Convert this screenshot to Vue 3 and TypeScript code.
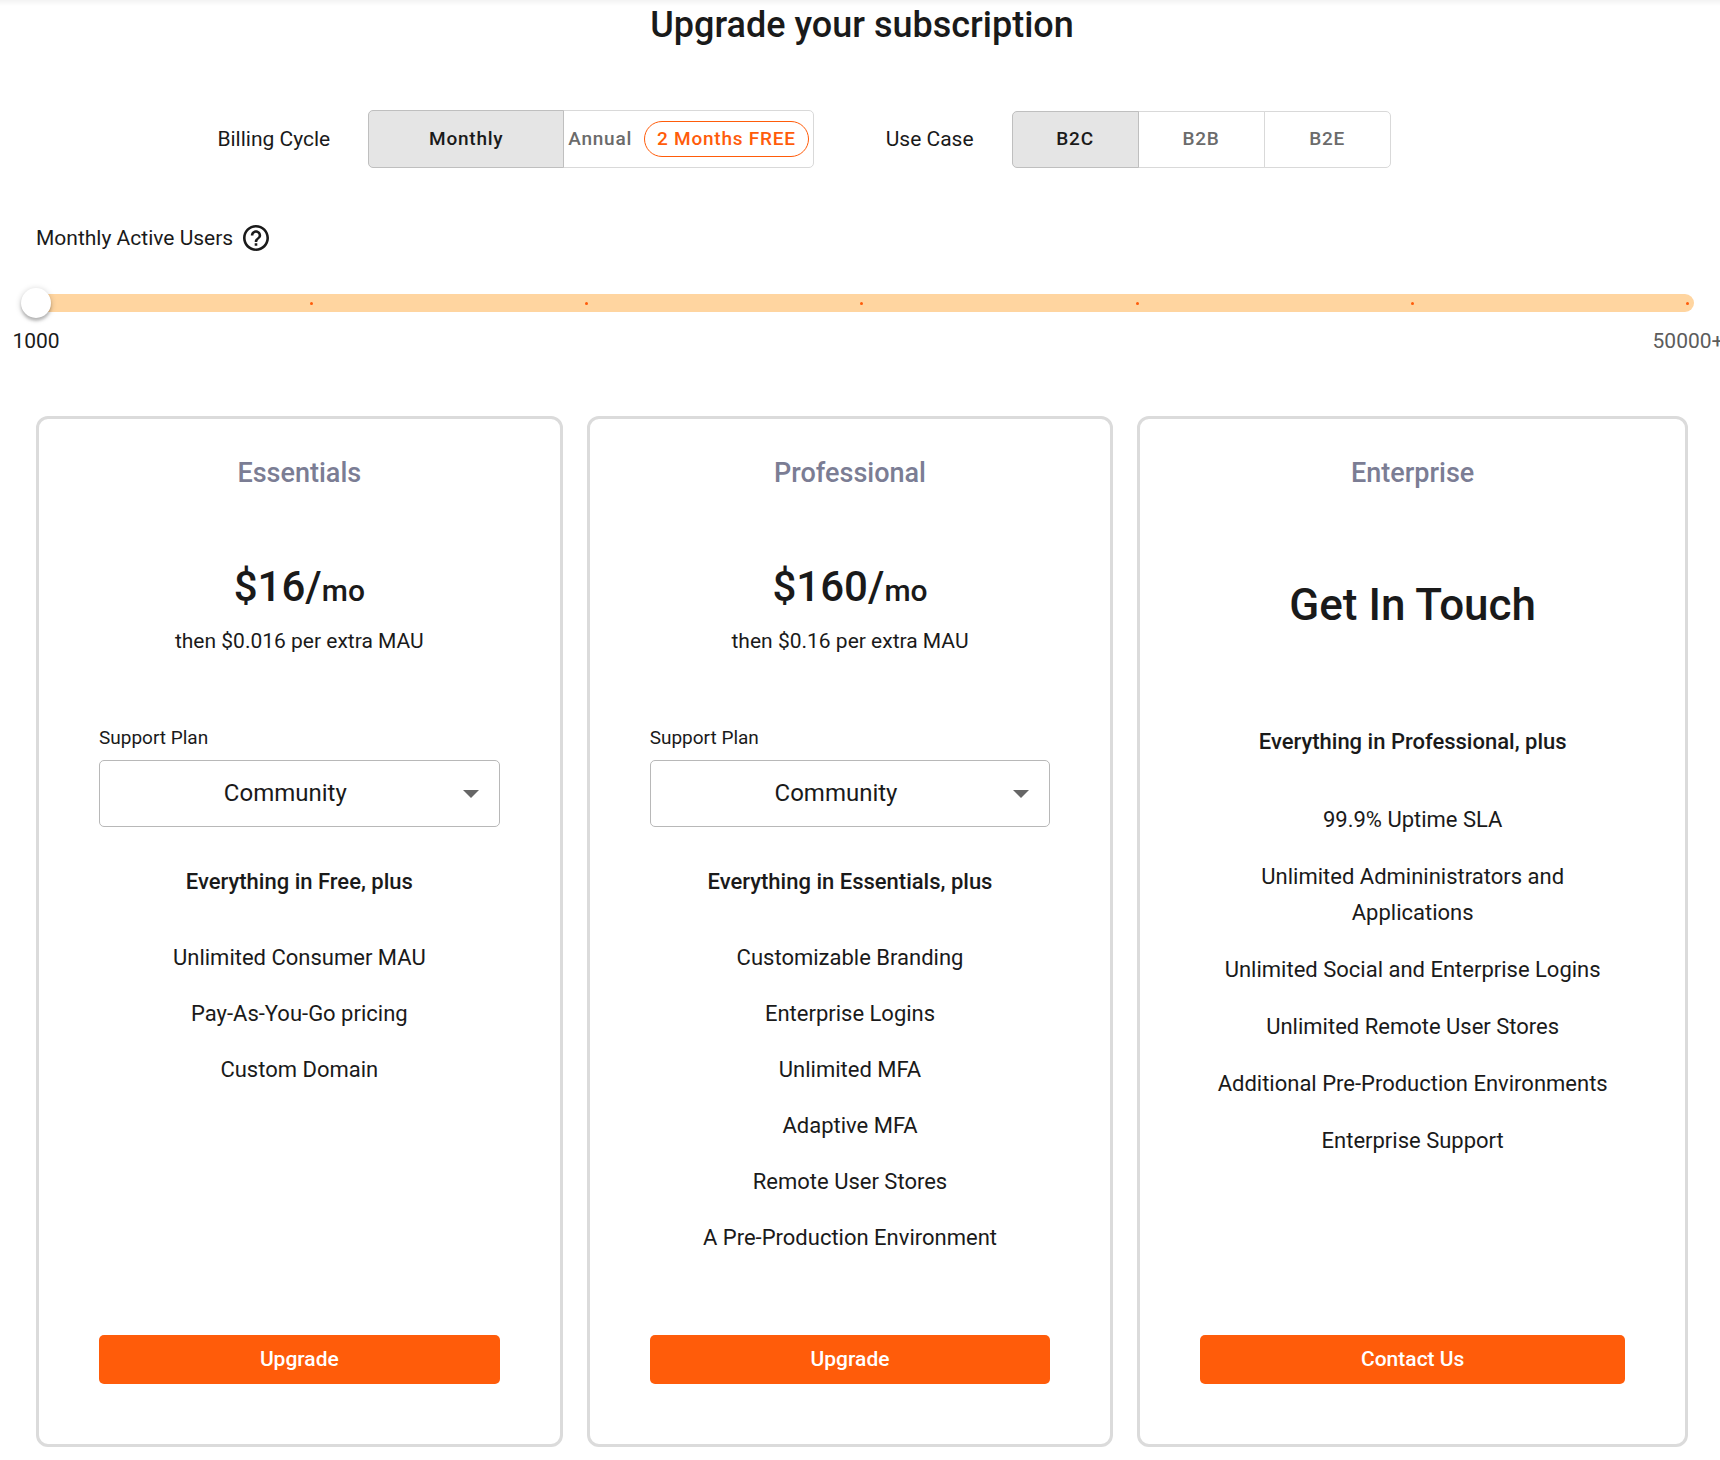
<script setup lang="ts">
import { ref } from 'vue'

interface Plan {
  id: string
  name: string
  price?: string
  extra?: string
  headline?: string
  intro: string
  features: string[]
  action: string
}

const cycle = ref<'monthly' | 'annual'>('monthly')
const useCase = ref('B2C')
const useCases = ['B2C', 'B2B', 'B2E']
const userStep = ref(0)
const stops = 7
const support = ref<Record<string, string>>({
  essentials: 'Community',
  professional: 'Community',
})
const supportPlans = ['Community', 'Standard', 'Premium']

const plans: Plan[] = [
  {
    id: 'essentials',
    name: 'Essentials',
    price: '$16/',
    extra: 'then $0.016 per extra MAU',
    intro: 'Everything in Free, plus',
    features: ['Unlimited Consumer MAU', 'Pay-As-You-Go pricing', 'Custom Domain'],
    action: 'Upgrade',
  },
  {
    id: 'professional',
    name: 'Professional',
    price: '$160/',
    extra: 'then $0.16 per extra MAU',
    intro: 'Everything in Essentials, plus',
    features: [
      'Customizable Branding',
      'Enterprise Logins',
      'Unlimited MFA',
      'Adaptive MFA',
      'Remote User Stores',
      'A Pre-Production Environment',
    ],
    action: 'Upgrade',
  },
  {
    id: 'enterprise',
    name: 'Enterprise',
    headline: 'Get In Touch',
    intro: 'Everything in Professional, plus',
    features: [
      '99.9% Uptime SLA',
      'Unlimited Admininistrators and Applications',
      'Unlimited Social and Enterprise Logins',
      'Unlimited Remote User Stores',
      'Additional Pre-Production Environments',
      'Enterprise Support',
    ],
    action: 'Contact Us',
  },
]
</script>

<template>
  <main class="page">
    <h1 class="title">Upgrade your subscription</h1>

    <div class="options">
      <div class="option" role="group" aria-labelledby="cycle-label">
        <span id="cycle-label" class="option-label">Billing Cycle</span>
        <div class="toggle">
          <button
            type="button"
            class="toggle-button monthly"
            :class="{ selected: cycle === 'monthly' }"
            :aria-pressed="cycle === 'monthly'"
            @click="cycle = 'monthly'"
          >Monthly</button>
          <button
            type="button"
            class="toggle-button annual"
            :class="{ selected: cycle === 'annual' }"
            :aria-pressed="cycle === 'annual'"
            @click="cycle = 'annual'"
          >Annual <span class="offer">2 Months FREE</span></button>
        </div>
      </div>
      <div class="option" role="group" aria-labelledby="case-label">
        <span id="case-label" class="option-label">Use Case</span>
        <div class="toggle">
          <button
            v-for="item in useCases"
            :key="item"
            type="button"
            class="toggle-button case"
            :class="{ selected: useCase === item }"
            :aria-pressed="useCase === item"
            @click="useCase = item"
          >{{ item }}</button>
        </div>
      </div>
    </div>

    <section class="users">
      <div class="users-head">
        <label for="mau">Monthly Active Users</label>
        <svg class="help" viewBox="2 2 20 20" aria-hidden="true">
          <path d="M11 18h2v-2h-2v2zm1-16C6.480 2 2 6.480 2 12s4.480 10 10 10 10-4.480 10-10S17.520 2 12 2zm0 18c-4.410 0-8-3.590-8-8s3.590-8 8-8 8 3.590 8 8-3.590 8-8 8zm0-14c-2.210 0-4 1.790-4 4h2c0-1.100.9-2 2-2s2 .9 2 2c0 2-3 1.750-3 5h2c0-2.250 3-2.500 3-5 0-2.210-1.790-4-4-4z" />
        </svg>
      </div>
      <div class="slider">
        <div class="rail">
          <span v-for="n in stops" :key="n" class="stop"></span>
        </div>
        <input id="mau" v-model.number="userStep" type="range" min="0" :max="stops - 1" step="1" />
      </div>
      <div class="marks">
        <span class="mark active">1000</span>
        <span class="mark">50000+</span>
      </div>
    </section>

    <section class="plans">
      <article v-for="plan in plans" :key="plan.id" class="plan" :class="plan.id">
        <h2 class="plan-name">{{ plan.name }}</h2>
        <div class="cost">
          <template v-if="plan.price">
            <p class="price">{{ plan.price }}<span class="per">mo</span></p>
            <p class="extra">{{ plan.extra }}</p>
          </template>
          <p v-else class="headline">{{ plan.headline }}</p>
        </div>
        <div v-if="plan.price" class="support">
          <label :for="`support-${plan.id}`">Support Plan</label>
          <div class="select-box">
            <select :id="`support-${plan.id}`" v-model="support[plan.id]">
              <option v-for="item in supportPlans" :key="item">{{ item }}</option>
            </select>
            <svg class="arrow" viewBox="0 0 16 8" aria-hidden="true"><path d="M0 0h16L8 8z" /></svg>
          </div>
        </div>
        <h3 class="intro">{{ plan.intro }}</h3>
        <ul class="features">
          <li v-for="feature in plan.features" :key="feature">{{ feature }}</li>
        </ul>
        <button type="button" class="action">{{ plan.action }}</button>
      </article>
    </section>
  </main>
</template>

<style>
body {
  margin: 0;
  background: #fff;
}
</style>

<style scoped>
.page {
  box-sizing: border-box;
  padding: 0 32px 12px 36px;
  overflow: hidden;
  background: linear-gradient(#f3f3f3, #fff 6px);
  color: #1a1a1a;
  font-family: Roboto, "Liberation Sans", sans-serif;
  font-size: 21px;
}

h1, h2, h3, p, ul {
  margin: 0;
  padding: 0;
}

button, select {
  font-family: inherit;
  color: inherit;
}

.title {
  padding-top: 4px;
  font-size: 36px;
  font-weight: 500;
  line-height: 42px;
  text-align: center;
}

.options {
  display: flex;
  justify-content: center;
  align-items: center;
  gap: 72px;
  margin-top: 64px;
  padding-right: 116px;
}

.option {
  display: flex;
  align-items: center;
  gap: 38px;
}

.option-label {
  line-height: 28px;
}

.toggle {
  display: flex;
}

.toggle-button {
  box-sizing: border-box;
  display: flex;
  align-items: center;
  justify-content: center;
  min-height: 57px;
  margin: 0 0 0 -1px;
  padding: 10px 4px;
  border: 1px solid #d9d9d9;
  background: #fff;
  color: #6b6b6b;
  font-size: 19px;
  font-weight: 500;
  letter-spacing: 0.04em;
  line-height: 34px;
}

.toggle-button:first-child {
  margin-left: 0;
  border-radius: 5px 0 0 5px;
}

.toggle-button:last-child {
  border-radius: 0 5px 5px 0;
}

.toggle-button.selected {
  z-index: 1;
  border-color: #bfbfbf;
  background: #e5e5e5;
  color: #1a1a1a;
}

.monthly {
  width: 196px;
}

.case {
  width: 127px;
}

.offer {
  margin-left: 12px;
  padding: 0 12px;
  border: 1px solid #ff5c0a;
  border-radius: 20px;
  color: #ff5c0a;
}

.users {
  margin-top: 55px;
}

.users-head {
  display: flex;
  align-items: center;
  gap: 10px;
  line-height: 30px;
}

.help {
  width: 26px;
  height: 26px;
  fill: #1a1a1a;
}

.slider {
  display: grid;
  align-items: center;
  margin: 35px -15px 0;
}

.rail,
.slider input {
  grid-area: 1 / 1;
}

.rail {
  display: flex;
  align-items: center;
  justify-content: space-between;
  height: 18px;
  margin: 0 9px;
  padding: 0 5px;
  border-radius: 9px;
  background: #ffd5a0;
}

.stop {
  width: 3px;
  height: 3px;
  border-radius: 50%;
  background: #ff5c0a;
}

.slider input {
  width: 100%;
  height: 30px;
  margin: 0;
  appearance: none;
  background: transparent;
}

.slider input::-webkit-slider-thumb {
  appearance: none;
  width: 30px;
  height: 30px;
  border-radius: 50%;
  background: #fff;
  box-shadow: 0 3px 3px rgba(0, 0, 0, 0.2), 0 1px 6px rgba(0, 0, 0, 0.2);
}

.marks {
  display: flex;
  justify-content: space-between;
  margin-top: 8px;
  line-height: 30px;
}

.mark {
  display: flex;
  justify-content: center;
  width: 0;
  color: #5c5c5c;
  white-space: nowrap;
}

.mark.active {
  color: #1a1a1a;
}

.plans {
  display: grid;
  grid-template-columns: 22fr 22fr 23fr;
  gap: 24px;
  margin-top: 60px;
}

.plan {
  display: flex;
  flex-direction: column;
  padding: 38px 60px 60px;
  border: 3px solid #dbdbdb;
  border-radius: 12px;
  text-align: center;
}

.plan-name {
  color: #7b7d94;
  font-size: 27px;
  font-weight: 500;
  line-height: 32px;
}

.cost {
  display: flex;
  flex-direction: column;
  gap: 12px;
  min-height: 163px;
  padding-top: 74px;
}

.price {
  font-size: 42px;
  font-weight: 500;
  line-height: 48px;
}

.per {
  font-size: 30px;
}

.extra {
  line-height: 28px;
}

.headline {
  padding-top: 18px;
  font-size: 44px;
  font-weight: 500;
  line-height: 48px;
}

.support {
  display: flex;
  flex-direction: column;
  gap: 10px;
  margin-bottom: 39px;
  font-size: 19px;
  line-height: 24px;
  text-align: left;
}

.select-box {
  display: grid;
  align-items: center;
}

.select-box > * {
  grid-area: 1 / 1;
}

.select-box select {
  width: 100%;
  height: 67px;
  padding: 0 42px 2px 14px;
  border: 1px solid #b8b8b8;
  border-radius: 5px;
  appearance: none;
  background: #fff;
  font-size: 24px;
  text-align: center;
  text-align-last: center;
}

.arrow {
  justify-self: end;
  width: 16px;
  height: 8px;
  margin-right: 21px;
  fill: #666;
  pointer-events: none;
}

.intro {
  font-size: 22px;
  font-weight: 500;
  line-height: 32px;
}

.features {
  display: flex;
  flex-direction: column;
  gap: 20px;
  margin: 42px 0 79px;
  font-size: 22px;
  line-height: 36px;
  list-style: none;
}

.enterprise .features {
  gap: 21px;
  margin-top: 44px;
}

.action {
  height: 49px;
  margin-top: auto;
  padding: 0 8px 1px;
  border: 0;
  border-radius: 5px;
  background: #ff5c0a;
  color: #fff;
  font-size: 21px;
  font-weight: 500;
}
</style>
